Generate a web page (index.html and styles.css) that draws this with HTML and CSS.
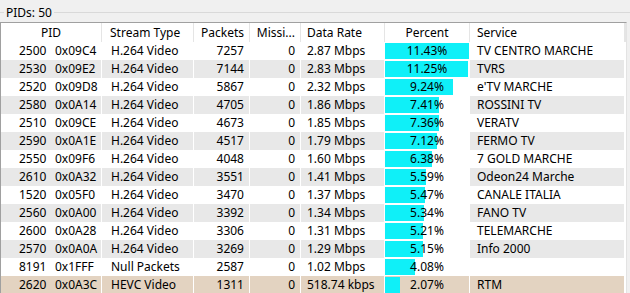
FILE: index.html
```html
<!DOCTYPE html>
<html>
<head>
<meta charset="utf-8">
<link rel="stylesheet" href="styles.css">
</head>
<body>
<div class="group">
  <div class="legend"><span class="legend-text">PIDs: 50</span></div>
  <div class="list">
    <div class="row head">
      <div class="c c-pid center">PID</div>
      <div class="c">Stream Type</div>
      <div class="c right">Packets</div>
      <div class="c right">Missi...</div>
      <div class="c c-rate">Data Rate</div>
      <div class="c center">Percent</div>
      <div class="c c-svc">Service</div>
    </div>
    <div class="row">
      <div class="c c-pid"><span class="dec">2500</span><span>0x09C4</span></div>
      <div class="c c-type">H.264 Video</div>
      <div class="c right">7257</div>
      <div class="c right">0</div>
      <div class="c c-rate">2.87 Mbps</div>
      <div class="c c-pct"><span class="bar" style="width:100%"></span><span class="pct">11.43%</span></div>
      <div class="c c-svc">TV CENTRO MARCHE</div>
    </div>
    <div class="row alt">
      <div class="c c-pid"><span class="dec">2530</span><span>0x09E2</span></div>
      <div class="c c-type">H.264 Video</div>
      <div class="c right">7144</div>
      <div class="c right">0</div>
      <div class="c c-rate">2.83 Mbps</div>
      <div class="c c-pct"><span class="bar" style="width:98.4%"></span><span class="pct">11.25%</span></div>
      <div class="c c-svc">TVRS</div>
    </div>
    <div class="row">
      <div class="c c-pid"><span class="dec">2520</span><span>0x09D8</span></div>
      <div class="c c-type">H.264 Video</div>
      <div class="c right">5867</div>
      <div class="c right">0</div>
      <div class="c c-rate">2.32 Mbps</div>
      <div class="c c-pct"><span class="bar" style="width:80.8%"></span><span class="pct">9.24%</span></div>
      <div class="c c-svc">e'TV MARCHE</div>
    </div>
    <div class="row alt">
      <div class="c c-pid"><span class="dec">2580</span><span>0x0A14</span></div>
      <div class="c c-type">H.264 Video</div>
      <div class="c right">4705</div>
      <div class="c right">0</div>
      <div class="c c-rate">1.86 Mbps</div>
      <div class="c c-pct"><span class="bar" style="width:64.8%"></span><span class="pct">7.41%</span></div>
      <div class="c c-svc">ROSSINI TV</div>
    </div>
    <div class="row">
      <div class="c c-pid"><span class="dec">2510</span><span>0x09CE</span></div>
      <div class="c c-type">H.264 Video</div>
      <div class="c right">4673</div>
      <div class="c right">0</div>
      <div class="c c-rate">1.85 Mbps</div>
      <div class="c c-pct"><span class="bar" style="width:64.4%"></span><span class="pct">7.36%</span></div>
      <div class="c c-svc">VERATV</div>
    </div>
    <div class="row alt">
      <div class="c c-pid"><span class="dec">2590</span><span>0x0A1E</span></div>
      <div class="c c-type">H.264 Video</div>
      <div class="c right">4517</div>
      <div class="c right">0</div>
      <div class="c c-rate">1.79 Mbps</div>
      <div class="c c-pct"><span class="bar" style="width:62.3%"></span><span class="pct">7.12%</span></div>
      <div class="c c-svc">FERMO TV</div>
    </div>
    <div class="row">
      <div class="c c-pid"><span class="dec">2550</span><span>0x09F6</span></div>
      <div class="c c-type">H.264 Video</div>
      <div class="c right">4048</div>
      <div class="c right">0</div>
      <div class="c c-rate">1.60 Mbps</div>
      <div class="c c-pct"><span class="bar" style="width:55.8%"></span><span class="pct">6.38%</span></div>
      <div class="c c-svc">7 GOLD MARCHE</div>
    </div>
    <div class="row alt">
      <div class="c c-pid"><span class="dec">2610</span><span>0x0A32</span></div>
      <div class="c c-type">H.264 Video</div>
      <div class="c right">3551</div>
      <div class="c right">0</div>
      <div class="c c-rate">1.41 Mbps</div>
      <div class="c c-pct"><span class="bar" style="width:48.9%"></span><span class="pct">5.59%</span></div>
      <div class="c c-svc">Odeon24 Marche</div>
    </div>
    <div class="row">
      <div class="c c-pid"><span class="dec">1520</span><span>0x05F0</span></div>
      <div class="c c-type">H.264 Video</div>
      <div class="c right">3470</div>
      <div class="c right">0</div>
      <div class="c c-rate">1.37 Mbps</div>
      <div class="c c-pct"><span class="bar" style="width:47.9%"></span><span class="pct">5.47%</span></div>
      <div class="c c-svc">CANALE ITALIA</div>
    </div>
    <div class="row alt">
      <div class="c c-pid"><span class="dec">2560</span><span>0x0A00</span></div>
      <div class="c c-type">H.264 Video</div>
      <div class="c right">3392</div>
      <div class="c right">0</div>
      <div class="c c-rate">1.34 Mbps</div>
      <div class="c c-pct"><span class="bar" style="width:46.7%"></span><span class="pct">5.34%</span></div>
      <div class="c c-svc">FANO TV</div>
    </div>
    <div class="row">
      <div class="c c-pid"><span class="dec">2600</span><span>0x0A28</span></div>
      <div class="c c-type">H.264 Video</div>
      <div class="c right">3306</div>
      <div class="c right">0</div>
      <div class="c c-rate">1.31 Mbps</div>
      <div class="c c-pct"><span class="bar" style="width:45.6%"></span><span class="pct">5.21%</span></div>
      <div class="c c-svc">TELEMARCHE</div>
    </div>
    <div class="row alt">
      <div class="c c-pid"><span class="dec">2570</span><span>0x0A0A</span></div>
      <div class="c c-type">H.264 Video</div>
      <div class="c right">3269</div>
      <div class="c right">0</div>
      <div class="c c-rate">1.29 Mbps</div>
      <div class="c c-pct"><span class="bar" style="width:45.1%"></span><span class="pct">5.15%</span></div>
      <div class="c c-svc">Info 2000</div>
    </div>
    <div class="row">
      <div class="c c-pid"><span class="dec">8191</span><span>0x1FFF</span></div>
      <div class="c c-type">Null Packets</div>
      <div class="c right">2587</div>
      <div class="c right">0</div>
      <div class="c c-rate">1.02 Mbps</div>
      <div class="c c-pct"><span class="bar" style="width:35.7%"></span><span class="pct">4.08%</span></div>
      <div class="c c-svc"></div>
    </div>
    <div class="row sel">
      <div class="c c-pid"><span class="dec">2620</span><span>0x0A3C</span></div>
      <div class="c c-type">HEVC Video</div>
      <div class="c right">1311</div>
      <div class="c right">0</div>
      <div class="c c-rate">518.74 kbps</div>
      <div class="c c-pct"><span class="bar" style="width:18.1%"></span><span class="pct">2.07%</span></div>
      <div class="c c-svc">RTM</div>
    </div>
  </div>
</div>
</body>
</html>
```

FILE: styles.css
```css
html, body {
  margin: 0;
  padding: 0;
  background: #f0f0f0;
  overflow: hidden;
}
body {
  width: 630px;
  height: 293px;
  font-family: "Noto Sans", "Open Sans", sans-serif;
  font-size: 12px;
  color: #000;
}
.group {
  padding-top: 4px;
}
.legend {
  position: relative;
  height: 18px;
  display: flex;
  align-items: center;
}
.legend::before {
  content: "";
  position: absolute;
  left: 0;
  right: 0;
  top: 8px;
  height: 1px;
  background: #d9d9d9;
}
.legend-text {
  position: relative;
  background: #f0f0f0;
  margin-left: 4px;
  padding: 0 2px;
  line-height: 18px;
}
.list {
  width: 625px;
  border-top: 1px solid #a0a0a0;
  border-left: 1px solid #a0a0a0;
  border-right: 1px solid #e3e3e3;
  background: #fff;
}
.row {
  display: grid;
  grid-template-columns: 100px 91px 55px 50px 83px 84px 154px;
  column-gap: 1px;
  height: 18px;
  background: #fff;
}
.row.head {
  height: 19px;
  background: #e5e5e5;
}
.c {
  background: #fff;
  display: flex;
  align-items: center;
  white-space: nowrap;
  overflow: hidden;
  padding-left: 8px;
  line-height: 18px;
}
.head .c {
  line-height: 19px;
}
.c.center {
  justify-content: center;
  padding-left: 0;
}
.c.right {
  justify-content: flex-end;
  padding-left: 0;
  padding-right: 5px;
}
.c-pid {
  padding-left: 18px;
}
.c-pid.center {
  padding-left: 0;
}
.dec {
  width: 36px;
}
.c-type {
  padding-left: 9px;
}
.c-rate {
  padding-left: 6px;
}
.c-svc {
  padding-left: 7px;
}
.c-pct {
  position: relative;
  justify-content: center;
  padding-left: 0;
}
.bar {
  position: absolute;
  left: 0;
  top: 1px;
  bottom: 1px;
  background: #0ff0f8;
}
.pct {
  position: relative;
}
.alt .c {
  background: #e8e8e8;
}
.alt .c-pct {
  background: #fff;
}
.sel .c {
  background: #e3d3c1;
}
```
